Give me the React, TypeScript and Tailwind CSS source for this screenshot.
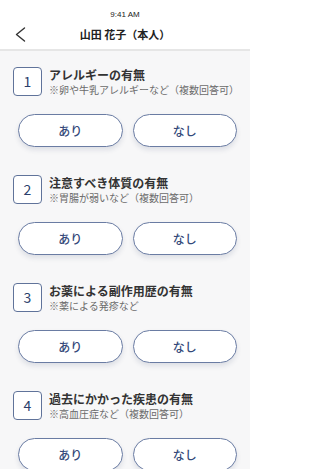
const questions = [
  { no: 1, title: 'アレルギーの有無', note: '※卵や牛乳アレルギーなど（複数回答可）' },
  { no: 2, title: '注意すべき体質の有無', note: '※胃腸が弱いなど（複数回答可）' },
  { no: 3, title: 'お薬による副作用歴の有無', note: '※薬による発疹など' },
  { no: 4, title: '過去にかかった疾患の有無', note: '※高血圧症など（複数回答可）' },
];

function Question({ no, title, note }: { no: number; title: string; note: string }) {
  return (
    <section className="pb-[28px]">
      <div className="flex h-[29px] items-center">
        <div className="flex h-[29px] w-[29px] shrink-0 items-center justify-center rounded-[4px] border border-[#60739a] bg-white text-[14px] text-[#2b3f6c]">
          {no}
        </div>
        <div className="ml-[7px] flex flex-col">
          <h2 className="text-[12px] font-bold leading-[16px] text-[#333333]">{title}</h2>
          <p className="text-[10px] leading-[13px] text-[#6b6b6b]">{note}</p>
        </div>
      </div>
      <div className="mt-[18px] ml-[5px] grid grid-cols-2 gap-[10px]">
        <button className="h-[33px] rounded-full border border-[#6a7ca3] bg-white text-[12px] font-medium text-[#34497a] shadow-[0_3px_5px_rgba(40,60,100,0.12)]">
          あり
        </button>
        <button className="h-[33px] rounded-full border border-[#6a7ca3] bg-white text-[12px] font-medium text-[#34497a] shadow-[0_3px_5px_rgba(40,60,100,0.12)]">
          なし
        </button>
      </div>
    </section>
  );
}

export default function App() {
  return (
    <div
      className="h-[469px] w-[250px] overflow-hidden bg-[#f7f7f8]"
      style={{ fontFamily: '"Noto Sans CJK JP", "Noto Sans", sans-serif' }}
    >
      <header className="border-b-2 border-[#e6e6e6] bg-white">
        <div
          className="flex h-[22px] items-end justify-center pb-[3px] text-[8px] leading-[8px] text-[#222]"
          style={{ fontFamily: '"Liberation Sans", sans-serif' }}
        >
          9:41 AM
        </div>
        <div className="relative flex h-[27px] items-center justify-center pb-[4px]">
          <svg
            className="absolute left-[14px] top-[5px] h-[15px] w-[13px]"
            viewBox="0 0 13 15"
            fill="none"
            stroke="#333"
            strokeWidth={1.4}
            strokeLinecap="round"
            strokeLinejoin="round"
          >
            <polyline points="10.5,1 2.5,7.5 10.5,14" />
          </svg>
          <h1 className="text-[11px] font-bold leading-[16px] text-[#222]">山田 花子（本人）</h1>
        </div>
      </header>
      <main className="px-[13px] pt-[16px]">
        {questions.map((q) => (
          <Question key={q.no} {...q} />
        ))}
      </main>
    </div>
  );
}
